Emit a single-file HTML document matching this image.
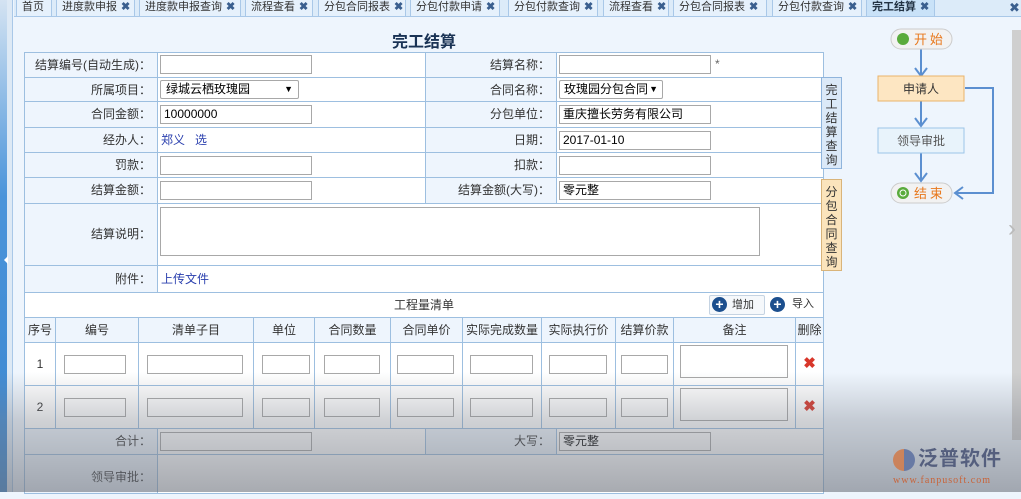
<!DOCTYPE html>
<html><head><meta charset="utf-8"><style>
*{margin:0;padding:0;box-sizing:border-box}
body{width:1021px;height:492px;overflow:hidden;position:relative;background:#eef5fd;font-family:"Liberation Sans","Noto Sans CJK SC",sans-serif;font-size:12px;color:#333}
.a{position:absolute}
.tabs{left:14px;top:0;height:17px;width:1007px;background:#dcebf9;border-bottom:1px solid #a9c8e8}
.tab{position:absolute;top:0;height:17px;border:1px solid #a9c8e8;border-top:none;background:#e6f1fc;color:#333;font-size:11px;line-height:15px;padding-left:5px;white-space:nowrap}
.tab b{color:#3a5f8f;font-size:11px;margin-left:4px}
.cell{position:absolute;border:1px solid #9dbfe0;background:#fff}
.lbl{background:#eef5fd;text-align:right;padding-right:6px;line-height:24px;color:#333}
.inp{position:absolute;border:1px solid #a8a8a8;background:#fff;height:19px;line-height:17px;padding-left:3px;font-size:12px;color:#000}
.hd{background:#eef5fd;text-align:center;line-height:24px}
</style></head><body>
<div class="a" style="left:0;top:0;width:7px;height:492px;background:linear-gradient(#d4e3f2,#4a94da 40%,#3a86d0)"></div>
<div class="a" style="left:7px;top:0;width:6px;height:492px;background:#dde9f5;border-right:1px solid #a9c8e8"></div>
<div class="a" style="left:4px;top:256px;width:0;height:0;border:4px solid transparent;border-right-color:#fff;border-left:none"></div>
<div class="a tabs"></div>
<div class="tab" style="left:16px;width:36px">首页</div>
<div class="tab" style="left:56px;width:79px">进度款申报<b>✖</b></div>
<div class="tab" style="left:139px;width:102px">进度款申报查询<b>✖</b></div>
<div class="tab" style="left:245px;width:68px">流程查看<b>✖</b></div>
<div class="tab" style="left:318px;width:88px">分包合同报表<b>✖</b></div>
<div class="tab" style="left:410px;width:90px">分包付款申请<b>✖</b></div>
<div class="tab" style="left:508px;width:90px">分包付款查询<b>✖</b></div>
<div class="tab" style="left:603px;width:66px">流程查看<b>✖</b></div>
<div class="tab" style="left:673px;width:94px">分包合同报表<b>✖</b></div>
<div class="tab" style="left:772px;width:90px">分包付款查询<b>✖</b></div>
<div class="tab" style="left:866px;width:69px;background:#c9e2f8;font-weight:bold;color:#234">完工结算<b>✖</b></div>
<div class="a" style="left:1009px;top:0;color:#3a5f8f;font-size:13px">✖</div>

<div class="a" style="left:392px;top:28px;font-size:16px;font-weight:bold;color:#1a3355">完工结算</div>

<div class="cell lbl" style="left:24px;top:52px;width:134px;height:26px">结算编号(自动生成)：</div>
<div class="cell" style="left:157px;top:52px;width:269px;height:26px"></div>
<div class="cell lbl" style="left:425px;top:52px;width:132px;height:26px">结算名称：</div>
<div class="cell" style="left:556px;top:52px;width:268px;height:26px"></div>
<div class="inp" style="left:160px;top:55px;width:152px"></div>
<div class="inp" style="left:559px;top:55px;width:152px"></div>
<div class="a" style="left:715px;top:57px;color:#666">*</div>

<div class="cell lbl" style="left:24px;top:77px;width:134px;height:25px">所属项目：</div>
<div class="cell" style="left:157px;top:77px;width:269px;height:25px"></div>
<div class="cell lbl" style="left:425px;top:77px;width:132px;height:25px">合同名称：</div>
<div class="cell" style="left:556px;top:77px;width:268px;height:25px"></div>
<div class="inp" style="left:160px;top:80px;width:139px;border-radius:2px;padding-left:5px">绿城云栖玫瑰园<span style="position:absolute;right:5px;font-size:9px">▼</span></div>
<div class="inp" style="left:559px;top:80px;width:104px;border-radius:2px;padding-left:4px">玫瑰园分包合同<span style="position:absolute;right:4px;font-size:9px">▼</span></div>

<div class="cell lbl" style="left:24px;top:101px;width:134px;height:27px">合同金额：</div>
<div class="cell" style="left:157px;top:101px;width:269px;height:27px"></div>
<div class="cell lbl" style="left:425px;top:101px;width:132px;height:27px">分包单位：</div>
<div class="cell" style="left:556px;top:101px;width:268px;height:27px"></div>
<div class="inp" style="left:160px;top:105px;width:152px">10000000</div>
<div class="inp" style="left:559px;top:105px;width:152px">重庆擅长劳务有限公司</div>

<div class="cell lbl" style="left:24px;top:127px;width:134px;height:26px">经办人：</div>
<div class="cell" style="left:157px;top:127px;width:269px;height:26px;color:#2a3fae;line-height:24px;padding-left:3px">郑义&nbsp;&nbsp;&nbsp;选</div>
<div class="cell lbl" style="left:425px;top:127px;width:132px;height:26px">日期：</div>
<div class="cell" style="left:556px;top:127px;width:268px;height:26px"></div>
<div class="inp" style="left:559px;top:131px;width:152px">2017-01-10</div>

<div class="cell lbl" style="left:24px;top:152px;width:134px;height:26px">罚款：</div>
<div class="cell" style="left:157px;top:152px;width:269px;height:26px"></div>
<div class="cell lbl" style="left:425px;top:152px;width:132px;height:26px">扣款：</div>
<div class="cell" style="left:556px;top:152px;width:268px;height:26px"></div>
<div class="inp" style="left:160px;top:156px;width:152px"></div>
<div class="inp" style="left:559px;top:156px;width:152px"></div>

<div class="cell lbl" style="left:24px;top:177px;width:134px;height:27px">结算金额：</div>
<div class="cell" style="left:157px;top:177px;width:269px;height:27px"></div>
<div class="cell lbl" style="left:425px;top:177px;width:132px;height:27px">结算金额(大写)：</div>
<div class="cell" style="left:556px;top:177px;width:268px;height:27px"></div>
<div class="inp" style="left:160px;top:181px;width:152px"></div>
<div class="inp" style="left:559px;top:181px;width:152px">零元整</div>

<div class="cell lbl" style="left:24px;top:203px;width:134px;height:63px;line-height:61px">结算说明：</div>
<div class="cell" style="left:157px;top:203px;width:667px;height:63px"></div>
<div class="inp" style="left:160px;top:207px;width:600px;height:49px"></div>

<div class="cell lbl" style="left:24px;top:265px;width:134px;height:28px;line-height:26px">附件：</div>
<div class="cell" style="left:157px;top:265px;width:667px;height:28px;color:#2a3fae;line-height:26px;padding-left:3px">上传文件</div>

<div class="cell" style="left:24px;top:292px;width:800px;height:26px;text-align:center;line-height:24px">工程量清单</div>
<div class="a" style="left:709px;top:295px;width:56px;height:20px;border:1px solid #c5d3e2;background:#f5f8fb;border-radius:2px;font-size:11px;line-height:18px;padding-left:22px">增加</div>
<div class="a" style="left:712px;top:297px;width:15px;height:15px;border-radius:50%;background:#1c4f8e;color:#fff;font-weight:bold;font-size:14px;line-height:15px;text-align:center">+</div>
<div class="a" style="left:768px;top:295px;width:54px;height:20px;font-size:11px;line-height:18px;padding-left:24px">导入</div>
<div class="a" style="left:770px;top:297px;width:15px;height:15px;border-radius:50%;background:#1c4f8e;color:#fff;font-weight:bold;font-size:14px;line-height:15px;text-align:center">+</div>

<div class="cell hd" style="left:24px;top:317px;width:32px;height:26px">序号</div>
<div class="cell hd" style="left:55px;top:317px;width:84px;height:26px">编号</div>
<div class="cell hd" style="left:138px;top:317px;width:116px;height:26px">清单子目</div>
<div class="cell hd" style="left:253px;top:317px;width:62px;height:26px">单位</div>
<div class="cell hd" style="left:314px;top:317px;width:77px;height:26px">合同数量</div>
<div class="cell hd" style="left:390px;top:317px;width:73px;height:26px">合同单价</div>
<div class="cell hd" style="left:462px;top:317px;width:80px;height:26px">实际完成数量</div>
<div class="cell hd" style="left:541px;top:317px;width:75px;height:26px">实际执行价</div>
<div class="cell hd" style="left:615px;top:317px;width:59px;height:26px">结算价款</div>
<div class="cell hd" style="left:673px;top:317px;width:123px;height:26px">备注</div>
<div class="cell hd" style="left:795px;top:317px;width:29px;height:26px">删除</div>

<div class="cell" style="left:24px;top:342px;width:32px;height:44px;text-align:center;line-height:42px">1</div>
<div class="cell" style="left:55px;top:342px;width:84px;height:44px"></div>
<div class="cell" style="left:138px;top:342px;width:116px;height:44px"></div>
<div class="cell" style="left:253px;top:342px;width:62px;height:44px"></div>
<div class="cell" style="left:314px;top:342px;width:77px;height:44px"></div>
<div class="cell" style="left:390px;top:342px;width:73px;height:44px"></div>
<div class="cell" style="left:462px;top:342px;width:80px;height:44px"></div>
<div class="cell" style="left:541px;top:342px;width:75px;height:44px"></div>
<div class="cell" style="left:615px;top:342px;width:59px;height:44px"></div>
<div class="cell" style="left:673px;top:342px;width:123px;height:44px"></div>
<div class="cell" style="left:795px;top:342px;width:29px;height:44px;text-align:center;line-height:42px;color:#d8362a;font-weight:bold;font-size:15px">✖</div>
<div class="inp" style="left:64px;top:355px;width:62px"></div>
<div class="inp" style="left:147px;top:355px;width:96px"></div>
<div class="inp" style="left:262px;top:355px;width:48px"></div>
<div class="inp" style="left:324px;top:355px;width:56px"></div>
<div class="inp" style="left:397px;top:355px;width:57px"></div>
<div class="inp" style="left:470px;top:355px;width:63px"></div>
<div class="inp" style="left:549px;top:355px;width:58px"></div>
<div class="inp" style="left:621px;top:355px;width:47px"></div>
<div class="inp" style="left:680px;top:345px;width:108px;height:33px"></div>

<div class="cell" style="left:24px;top:385px;width:32px;height:44px;text-align:center;line-height:42px">2</div>
<div class="cell" style="left:55px;top:385px;width:84px;height:44px"></div>
<div class="cell" style="left:138px;top:385px;width:116px;height:44px"></div>
<div class="cell" style="left:253px;top:385px;width:62px;height:44px"></div>
<div class="cell" style="left:314px;top:385px;width:77px;height:44px"></div>
<div class="cell" style="left:390px;top:385px;width:73px;height:44px"></div>
<div class="cell" style="left:462px;top:385px;width:80px;height:44px"></div>
<div class="cell" style="left:541px;top:385px;width:75px;height:44px"></div>
<div class="cell" style="left:615px;top:385px;width:59px;height:44px"></div>
<div class="cell" style="left:673px;top:385px;width:123px;height:44px"></div>
<div class="cell" style="left:795px;top:385px;width:29px;height:44px;text-align:center;line-height:42px;color:#d8362a;font-weight:bold;font-size:15px">✖</div>
<div class="inp" style="left:64px;top:398px;width:62px"></div>
<div class="inp" style="left:147px;top:398px;width:96px"></div>
<div class="inp" style="left:262px;top:398px;width:48px"></div>
<div class="inp" style="left:324px;top:398px;width:56px"></div>
<div class="inp" style="left:397px;top:398px;width:57px"></div>
<div class="inp" style="left:470px;top:398px;width:63px"></div>
<div class="inp" style="left:549px;top:398px;width:58px"></div>
<div class="inp" style="left:621px;top:398px;width:47px"></div>
<div class="inp" style="left:680px;top:388px;width:108px;height:33px"></div>

<div class="cell lbl" style="left:24px;top:428px;width:134px;height:27px;line-height:25px">合计：</div>
<div class="cell" style="left:157px;top:428px;width:269px;height:27px"></div>
<div class="cell lbl" style="left:425px;top:428px;width:132px;height:27px;line-height:25px">大写：</div>
<div class="cell" style="left:556px;top:428px;width:268px;height:27px"></div>
<div class="inp" style="left:160px;top:432px;width:152px"></div>
<div class="inp" style="left:559px;top:432px;width:152px">零元整</div>
<div class="cell lbl" style="left:24px;top:454px;width:134px;height:40px;line-height:44px">领导审批：</div>
<div class="cell" style="left:157px;top:454px;width:667px;height:40px"></div>

<div class="a" style="left:821px;top:77px;width:21px;height:92px;background:#dbe9f8;border:1px solid #8fb4dc;color:#333;font-size:12px;line-height:14px;text-align:center;padding-top:5px">完<br>工<br>结<br>算<br>查<br>询</div>
<div class="a" style="left:821px;top:179px;width:21px;height:92px;background:#fbe4bc;border:1px solid #d9b47a;color:#333;font-size:12px;line-height:14px;text-align:center;padding-top:5px">分<br>包<br>合<br>同<br>查<br>询</div>

<svg class="a" style="left:860px;top:26px" width="150" height="180">
<g stroke="#5b8fd0" stroke-width="2" fill="none">
<path d="M61,22 V50"/><path d="M55,42 L61,50 L67,42"/>
<path d="M61,75 V100"/><path d="M55,92 L61,100 L67,92"/>
<path d="M61,127 V155"/><path d="M55,147 L61,155 L67,147"/>
<path d="M105,62 H133 V167 H95"/><path d="M103,161 L95,167 L103,173"/>
</g>
<rect x="31" y="3" width="61" height="20" rx="10" fill="#f2f2f2" stroke="#ccc"/>
<circle cx="43" cy="13" r="6" fill="#5aab3c"/>
<text x="54" y="18" font-size="13" fill="#e8781c" font-family="Noto Sans CJK SC">开 始</text>
<rect x="18" y="50" width="86" height="25" fill="#fde6c2" stroke="#e9b46a"/>
<text x="61" y="67" font-size="12" fill="#333" text-anchor="middle" font-family="Noto Sans CJK SC">申请人</text>
<rect x="18" y="102" width="86" height="25" fill="#e8f3fb" stroke="#9cc5e8"/>
<text x="61" y="119" font-size="12" fill="#555" text-anchor="middle" font-family="Noto Sans CJK SC">领导审批</text>
<rect x="31" y="157" width="61" height="20" rx="10" fill="#f2f2f2" stroke="#ccc"/>
<circle cx="43" cy="167" r="6" fill="#5aab3c"/><circle cx="43" cy="167" r="3" fill="none" stroke="#fff"/>
<text x="54" y="172" font-size="13" fill="#e8781c" font-family="Noto Sans CJK SC">结 束</text>
</svg>

<div class="a" style="left:1012px;top:30px;width:9px;height:410px;background:#cfcfcf"></div>
<div class="a" style="left:1008px;top:215px;color:#bbb;font-size:24px">›</div>

<div class="a" style="left:0;top:372px;width:1021px;height:120px;background:linear-gradient(rgba(120,125,135,0),rgba(120,125,135,0.35) 40%,rgba(110,115,125,0.6))"></div>
<div class="a" style="left:893px;top:449px;width:22px;height:22px;border-radius:50%;background:conic-gradient(#5b6fa0 0 50%,#d07a4a 50% 100%);opacity:.85"></div>
<div class="a" style="left:918px;top:446px;font-size:20px;line-height:26px;color:#555f7e;font-weight:bold;letter-spacing:1px">泛普软件</div>
<div class="a" style="left:893px;top:475px;font-size:10px;color:#c8643a;font-family:'Liberation Serif',serif;letter-spacing:1px">www.fanpusoft.com</div>
</body></html>
